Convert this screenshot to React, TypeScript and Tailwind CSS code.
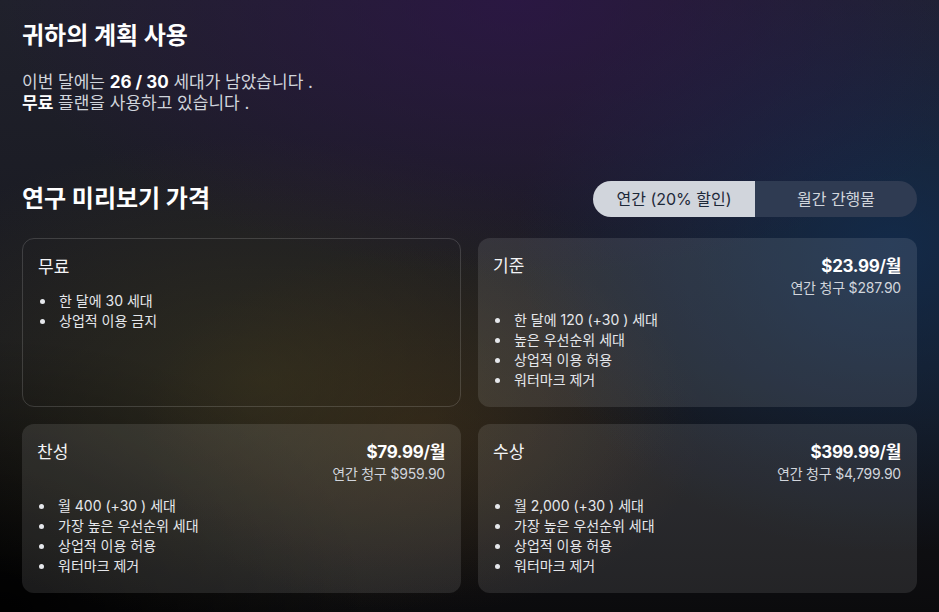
import React from 'react'

type Plan = {
    name: string
    price?: string
    yearly?: string
    features: string[]
    highlight: boolean
}

const plans: Plan[] = [
    { name: '무료', features: ['한 달에 30 세대', '상업적 이용 금지'], highlight: false },
    {
        name: '기준',
        price: '$23.99',
        yearly: '$287.90',
        features: ['한 달에 120 (+30 ) 세대', '높은 우선순위 세대', '상업적 이용 허용', '워터마크 제거'],
        highlight: true,
    },
    {
        name: '찬성',
        price: '$79.99',
        yearly: '$959.90',
        features: ['월 400 (+30 ) 세대', '가장 높은 우선순위 세대', '상업적 이용 허용', '워터마크 제거'],
        highlight: true,
    },
    {
        name: '수상',
        price: '$399.99',
        yearly: '$4,799.90',
        features: ['월 2,000 (+30 ) 세대', '가장 높은 우선순위 세대', '상업적 이용 허용', '워터마크 제거'],
        highlight: true,
    },
]

function PlanCard({ plan }: { plan: Plan }) {
    return (
        <div
            className={
                plan.highlight
                    ? 'rounded-xl bg-white/10 pl-[15px] pr-4 pt-4 pb-4'
                    : 'rounded-xl border border-white/15 pl-[15px] pr-4 pt-4 pb-4'
            }
        >
            <div className="flex items-start justify-between mb-3">
                <div className="text-[17px] leading-6 text-gray-100">{plan.name}</div>
                {plan.price && (
                    <div className="text-right">
                        <div className="text-[17px] leading-6 font-bold text-white tracking-[-0.3px]">
                            {plan.price}<span className="font-semibold">/월</span>
                        </div>
                        <div className="text-sm leading-5 text-gray-300 tracking-[-0.2px]">연간 청구 {plan.yearly}</div>
                    </div>
                )}
            </div>
            <ul>
                {plan.features.map(f => (
                    <li key={f} className="flex items-center gap-[14px] text-sm leading-5 text-gray-200">
                        <span className="ml-[2px] w-[5px] h-[5px] rounded-full bg-gray-200 shrink-0" />
                        {f}
                    </li>
                ))}
            </ul>
        </div>
    )
}

export default function App() {
    return (
        <div
            className="min-h-screen w-full text-white bg-[#14151b] bg-[radial-gradient(ellipse_55%_45%_at_55%_0%,rgba(48,18,78,0.65),transparent),radial-gradient(ellipse_40%_50%_at_95%_40%,rgba(16,48,88,0.7),transparent),radial-gradient(ellipse_45%_40%_at_28%_62%,rgba(68,62,30,0.5),transparent),radial-gradient(ellipse_30%_30%_at_45%_70%,rgba(70,45,20,0.45),transparent),radial-gradient(ellipse_40%_45%_at_0%_100%,rgba(0,0,0,0.95),transparent),linear-gradient(180deg,#20212c_0%,#17181e_60%,#0b0b0d_100%)]"
            style={{ fontFamily: 'Inter, "Noto Sans CJK KR", sans-serif' }}
        >
            <div className="px-[22px] pt-[20px] pb-5">
                <h1 className="text-2xl leading-8 font-bold text-white">귀하의 계획 사용</h1>
                <div className="mt-[20px] text-[17px] leading-[21px] text-gray-300">
                    <p>
                        이번 달에는 <span className="font-bold text-white">26 / 30</span> 세대가 남았습니다 .
                    </p>
                    <p>
                        <span className="font-bold text-white">무료</span> 플랜을 사용하고 있습니다 .
                    </p>
                </div>

                <div className="mt-[67px] flex items-center justify-between">
                    <h2 className="text-2xl leading-9 font-bold text-white">연구 미리보기 가격</h2>
                    <div className="flex h-9 w-[324px] rounded-full overflow-hidden text-base">
                        <button className="flex-1 bg-gray-300 text-gray-800">연간 (20% 할인)</button>
                        <button className="flex-1 bg-[#2f3b52] text-gray-300">월간 간행물</button>
                    </div>
                </div>

                <div className="mt-[21px] grid grid-cols-2 gap-[17px] auto-rows-[169px]">
                    {plans.map(p => (
                        <PlanCard key={p.name} plan={p} />
                    ))}
                </div>
            </div>
        </div>
    )
}
